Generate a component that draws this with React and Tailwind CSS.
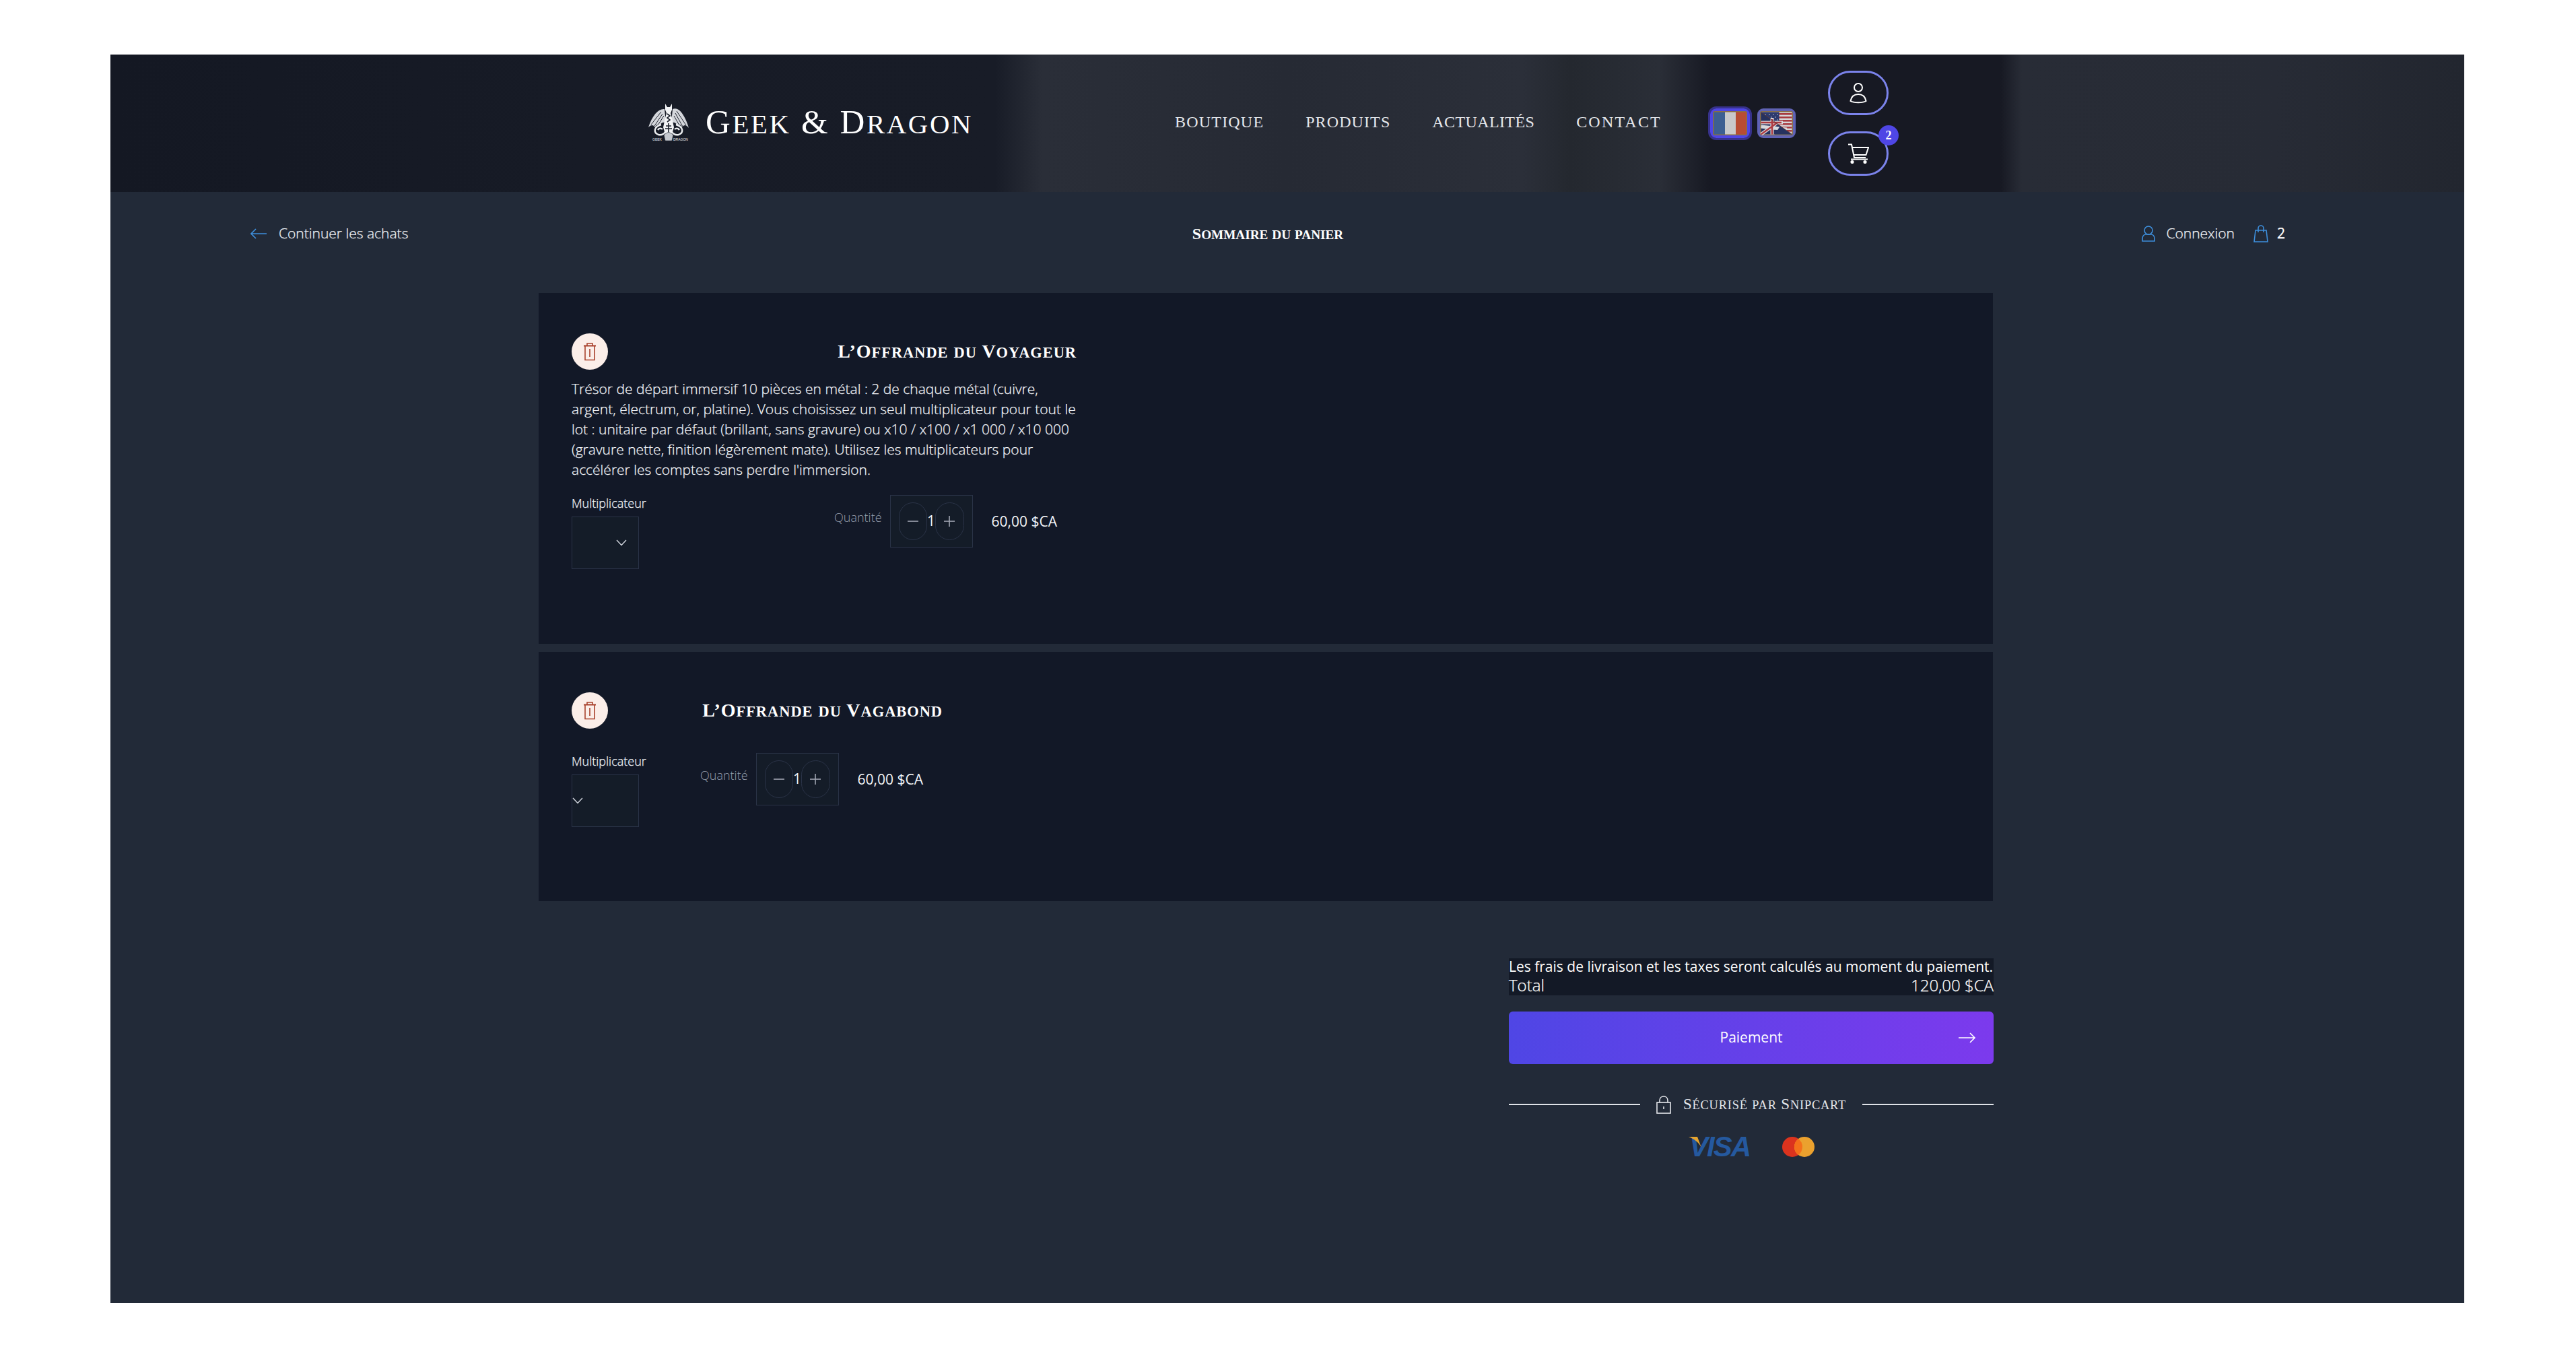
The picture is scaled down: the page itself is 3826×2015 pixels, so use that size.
import React from "react";

const serif = "[font-family:'Liberation_Serif',serif]";
const sans = "[font-family:'Open_Sans',sans-serif]";
const crisp = "[-webkit-text-stroke:0.25px_currentColor]";

function SC({ text }) {
  const parts = text.match(/[a-zàâéèêëîïôöùûç]+|[^a-zàâéèêëîïôöùûç]+/g);
  return (
    <>
      {parts.map((p, i) =>
        /^[a-zàâéèêëîïôöùûç]/.test(p) ? (
          <span key={i} className="text-[0.8em] uppercase">{p}</span>
        ) : (
          <span key={i}>{p}</span>
        )
      )}
    </>
  );
}

function Dragon() {
  return (
    <svg width="62" height="60" viewBox="0 0 62 60" className="shrink-0">
      <path d="M25 9 C16 8 7 18 1 36 C5 32 8 32 11 36 C12 32 15 31 18 34 C19 30 22 28 27 29 Z" fill="#d4d6db" />
      <path d="M37 9 C46 5 55 17 61 37 C57 32 54 32 51 36 C50 32 47 31 44 34 C43 30 40 28 35 29 Z" fill="#d4d6db" />
      <path d="M5 32 L20 13 M10 34 L22 16 M15 33 L24 19 M57 33 L43 12 M52 35 L41 15 M47 33 L39 19" stroke="#20242f" strokeWidth="1" fill="none" />
      <path d="M26 1 L29 6 L33 6 L36 1 L36 10 L34 15 L36 22 L39 36 L36 46 L26 46 L23 36 L26 22 L28 15 L26 10 Z" fill="#f2f3f5" />
      <path d="M29 16 L33 19 L29 22 L33 25 L29 28 M27 34 L35 34 M31 30 L31 44 M26 38 L36 38" stroke="#1a1e29" strokeWidth="1.6" fill="none" />
      <path d="M20 32 C9 35 8 44 16 47 C21 48 24 46 26 43 M15 40 C17 37 20 37 22 39 M42 32 C53 35 54 44 46 47 C41 48 38 46 36 43 M47 40 C45 37 42 37 40 39" stroke="#eceef0" strokeWidth="2.4" fill="none" />
      <path d="M31 43 L38 47 L36 56 L26 56 L24 47 Z" fill="#c5c8ce" stroke="#1a1e29" strokeWidth=".6" />
      <text x="7" y="56" fontSize="5" fill="#e5e7eb" fontFamily="Liberation Sans, sans-serif">GEEK</text>
      <text x="38" y="56" fontSize="5" fill="#e5e7eb" fontFamily="Liberation Sans, sans-serif">DRAGON</text>
    </svg>
  );
}

function FlagFr() {
  return (
    <svg width="51" height="36" viewBox="0 0 51 36" className="block rounded-[3px]">
      <rect width="51" height="36" fill="#8a6f45" />
      <rect x="1.5" y="1.5" width="16.5" height="33" fill="#3d5f92" />
      <rect x="18" y="1.5" width="16" height="33" fill="#c9c9cb" />
      <rect x="34" y="1.5" width="15.5" height="33" fill="#b84c33" />
    </svg>
  );
}

function FlagEn() {
  const stripes = [3, 8, 13, 18, 23, 28];
  return (
    <svg width="49" height="36" viewBox="0 0 49 36" className="block rounded-[3px]">
      <rect width="49" height="36" fill="#8a6f45" />
      <rect x="1.5" y="1.5" width="46" height="33" fill="#d6d6d8" />
      {stripes.map((y) => (
        <rect key={y} x="1.5" y={y} width="46" height="2.6" fill="#a83a3f" />
      ))}
      <rect x="1.5" y="1.5" width="27" height="15" fill="#2d3a6e" />
      <g fill="#dfe0e4">
        <circle cx="8" cy="5" r=".7" /><circle cx="14" cy="5" r=".7" /><circle cx="20" cy="5" r=".7" /><circle cx="26" cy="5" r=".7" />
        <circle cx="17" cy="9" r=".7" /><circle cx="23" cy="9" r=".7" /><circle cx="26" cy="13" r=".7" />
      </g>
      <path d="M1.5 1.5 L47.5 34.5 L1.5 34.5 Z" fill="#26325f" />
      <path d="M1.5 17 L34 17 M18 34.5 L18 10 M1.5 34.5 L26 17 M1.5 23 L40 27" stroke="#d9d9dc" strokeWidth="5" fill="none" />
      <path d="M1.5 17 L32 17 M18 34.5 L18 12 M1.5 34.5 L26 17" stroke="#ad3a40" strokeWidth="2.5" fill="none" />
      <path d="M22 34.5 L47.5 34.5 L30 22 Z" fill="#26325f" />
      <path d="M1.5 1.5 L47.5 34.5" stroke="#5a3a3a" strokeWidth="1" />
    </svg>
  );
}

function Trash() {
  return (
    <svg width="20" height="27" viewBox="0 0 20 27" fill="none" stroke="#a8412c" strokeWidth="1.6">
      <path d="M6 4 V1 H14 V4" />
      <path d="M1 4.5 H19" strokeWidth="2" />
      <path d="M3 5 V25.5 H17 V5" />
      <path d="M10 9 V21" />
    </svg>
  );
}

function Chevron() {
  return (
    <svg width="16" height="10" viewBox="0 0 16 10" fill="none" stroke="#d8dce4" strokeWidth="1.3">
      <path d="M1 1 L8 8.5 L15 1" />
    </svg>
  );
}

function QtyButton({ plus }) {
  return (
    <div className="flex h-[56px] w-[43px] items-center justify-center rounded-full border border-[#2a3347]">
      <svg width="18" height="18" viewBox="0 0 18 18" stroke="#a0a6b2" strokeWidth="1.6">
        <path d="M1 9 H17" />
        {plus ? <path d="M9 1 V17" /> : null}
      </svg>
    </div>
  );
}

function Controls({ width, chevron }) {
  return (
    <div className={`flex items-start justify-between ${width}`}>
      <div className="flex w-[111px] flex-col gap-2">
        <div className={`${sans} ${crisp} h-6 text-[18px] leading-6 font-light whitespace-nowrap text-[#f3f5f9]`}>Multiplicateur</div>
        <div className={`flex h-[78px] w-[100px] items-center border border-[#2a3347] bg-[#141c28] ${chevron}`}>
          <Chevron />
        </div>
      </div>
      <div className="flex items-start pr-[29px]">
        <div className={`${sans} mt-[20px] mr-[12px] text-[18px] leading-[26px] font-light text-[#979eab]`}>Quantité</div>
        <div className="flex h-[78px] w-[123px] items-center justify-between border border-[#2a3347] bg-[#141c28] px-[12px]">
          <QtyButton />
          <span className={`${sans} text-[21px] text-[#eef1f5]`}>1</span>
          <QtyButton plus />
        </div>
        <div className={`${sans} ml-[28px] text-[21px] leading-[78px] whitespace-nowrap text-[#f3f5f8]`}>60,00 $CA</div>
      </div>
    </div>
  );
}

function TitleRow({ text }) {
  return (
    <div className="flex h-[54px] items-center justify-between">
      <div className="flex h-[54px] w-[54px] items-center justify-center rounded-full bg-[#fbeee9]">
        <Trash />
      </div>
      <h2 className={`${serif} text-[28px] font-bold tracking-[1px] whitespace-nowrap text-white`}><SC text={text} /></h2>
    </div>
  );
}

export default function App() {
  return (
    <div className="h-[2015px] w-[3826px] overflow-hidden bg-white pt-[81px] pl-[164px]">
      <div className="flex h-[1854px] w-[3496px] flex-col bg-[#222a38]">
        <header className="flex h-[204px] items-center bg-[linear-gradient(90deg,#141823_0%,#171b26_20%,#181c27_37.6%,#2a2e38_39.6%,#262a34_50%,#2b2f39_60%,#24282f_62%,#2a2e37_65.8%,#171923_68%,#171923_80.3%,#282c36_81.2%,#272b35_92%,#22262f_100%)] pl-[798px]">
          <Dragon />
          <div className={`${serif} ml-[24px] w-[394px] -translate-y-[2px] text-[51px] leading-none font-normal tracking-[2.6px] whitespace-nowrap text-white`}><SC text="Geek & Dragon" /></div>
          <nav className={`${serif} ml-[303px] flex w-[723px] -translate-y-[2px] justify-between text-[24px] text-[#e5e7eb]`}>
            <span className="tracking-[1.2px]">BOUTIQUE</span>
            <span className="tracking-[1.1px]">PRODUITS</span>
            <span className="tracking-[0.4px]">ACTUALITÉS</span>
            <span className="tracking-[2.2px]">CONTACT</span>
          </nav>
          <div className="ml-[72px] flex items-center gap-[11px]">
            <div className="rounded-[9px] border-[4px] border-[#4f46e5] shadow-[0_0_0_3px_#37328b]"><FlagFr /></div>
            <div className="rounded-[9px] border-[4px] border-[#5f62b4]"><FlagEn /></div>
          </div>
          <div className="ml-[48px] flex flex-col gap-[24px]">
            <div className="flex h-[66px] w-[90px] items-center justify-center rounded-full border-[3px] border-[#7b83eb]">
              <svg width="26" height="32" viewBox="0 0 26 32" fill="none" stroke="white" strokeWidth="2">
                <circle cx="13" cy="8" r="6" />
                <path d="M1.5 28 C3 20 8 18 13 18 C18 18 23 20 24.5 28 C20 31 6 31 1.5 28 Z" />
              </svg>
            </div>
            <div className="relative flex h-[66px] w-[90px] items-center justify-center rounded-full border-[3px] border-[#7b83eb]">
              <svg width="32" height="30" viewBox="0 0 32 30" fill="none" stroke="white" strokeWidth="2">
                <path d="M1 1.5 H6 L10 21 H27" />
                <path d="M7 6 H31 L27.5 17 H9.5" />
                <path d="M5 23.5 H30" />
                <circle cx="7" cy="27.5" r="1.6" fill="white" />
                <circle cx="26" cy="27.5" r="1.6" fill="white" />
              </svg>
              <div className={`absolute -top-[12px] -right-[18px] flex h-[30px] w-[30px] items-center justify-center rounded-full bg-[#4f46e5] ${serif} text-[18px] font-bold text-white`}>2</div>
            </div>
          </div>
        </header>

        <main className="flex flex-1 flex-col">
          <div className="flex h-[124px] items-center justify-between pr-[266px] pl-[208px]">
            <div className={`${sans} ${crisp} flex w-[400px] items-center gap-[18px] text-[21px] font-light text-[#eef1f6]`}>
              <svg width="24" height="16" viewBox="0 0 24 16" fill="none" stroke="#3e8fdc" strokeWidth="1.6">
                <path d="M24 8 H1 M8 1 L1 8 L8 15" />
              </svg>
              <span>Continuer les achats</span>
            </div>
            <div className={`${serif} text-[24px] font-bold whitespace-nowrap text-white`}><SC text="Sommaire du panier" /></div>
            <div className={`${sans} ${crisp} flex w-[400px] items-center justify-end text-[21px] font-light text-[#f3f5f9]`}>
              <svg width="20" height="24" viewBox="0 0 20 24" fill="none" stroke="#3e8fdc" strokeWidth="1.6" className="mr-[16px]">
                <circle cx="10" cy="7" r="6" />
                <path d="M1 19 C1 15 4 13 6 13 H14 C16 13 19 15 19 19 V23 H1 Z" />
              </svg>
              <span>Connexion</span>
              <svg width="22" height="26" viewBox="0 0 22 26" fill="none" stroke="#3e8fdc" strokeWidth="1.6" className="mr-[13px] ml-[28px]">
                <path d="M3 8 H19 L21 25 H1 Z" />
                <path d="M7 11 V5 C7 2.5 9 1 11 1 C13 1 15 2.5 15 5 V11" />
              </svg>
              <span className="font-normal text-white">2</span>
            </div>
          </div>

          <div className="mt-[26px] ml-[636px] flex w-[2160px] flex-col gap-[12px]">
            <section className="bg-[#121827] pt-[60px] pr-[49px] pb-[111px] pl-[49px]">
              <div className="flex w-[750px] flex-col">
                <TitleRow text="L’Offrande du Voyageur" />
                <p className={`${sans} ${crisp} mt-[13px] mb-[23px] text-[21px] leading-[30px] font-light text-[#f3f5f9]`}>
                  Trésor de départ immersif 10 pièces en métal : 2 de chaque métal (cuivre, argent, électrum, or, platine). Vous choisissez un seul multiplicateur pour tout le lot : unitaire par défaut (brillant, sans gravure) ou x10 / x100 / x1 000 / x10 000 (gravure nette, finition légèrement mate). Utilisez les multiplicateurs pour accélérer les comptes sans perdre l'immersion.
                </p>
                <Controls width="w-[750px]" chevron="justify-end pr-[17px]" />
              </div>
            </section>
            <section className="bg-[#121827] pt-[60px] pr-[49px] pb-[110px] pl-[49px]">
              <div className="flex w-[551px] flex-col">
                <TitleRow text="L’Offrande du Vagabond" />
                <div className="mt-[36px]">
                  <Controls width="w-[551px]" chevron="justify-start" />
                </div>
              </div>
            </section>
          </div>

          <div className="mt-[85px] ml-[2077px] flex w-[720px] flex-col">
            <div className={`${sans} bg-[#131926] text-white`}>
              <div className="h-[26px] text-[21px] leading-[24px] font-normal whitespace-nowrap">Les frais de livraison et les taxes seront calculés au moment du paiement.</div>
              <div className={`flex h-[29px] justify-between text-[24px] leading-[27px] font-light ${crisp}`}>
                <span>Total</span>
                <span>120,00 $CA</span>
              </div>
            </div>
            <div className={`${sans} relative mt-[24px] flex h-[78px] items-center justify-center rounded-[6px] bg-[linear-gradient(90deg,#4f46e5,#7c3aed)] text-[21px] font-medium text-white`}>
              <span>Paiement</span>
              <svg width="26" height="16" viewBox="0 0 26 16" fill="none" stroke="white" strokeWidth="1.6" className="absolute right-[26px]">
                <path d="M0 8 H24 M17 1 L24 8 L17 15" />
              </svg>
            </div>
            <div className="mt-[47px] flex h-[26px] items-center justify-between">
              <div className="h-[2px] w-[195px] bg-[#dfe2e7]" />
              <div className="flex items-center gap-[18px]">
                <svg width="22" height="27" viewBox="0 0 22 27" fill="none" stroke="#e5e7eb" strokeWidth="1.6">
                  <rect x="1" y="10" width="20" height="16" />
                  <path d="M5 10 V7 C5 3 8 1 11 1 C14 1 17 3 17 7 V10" />
                  <path d="M11 16 V20" />
                </svg>
                <span className={`${serif} text-[23px] tracking-[0.8px] whitespace-nowrap text-[#e5e7eb]`}><SC text="Sécurisé par Snipcart" /></span>
              </div>
              <div className="h-[2px] w-[195px] bg-[#dfe2e7]" />
            </div>
            <div className="mt-[35px] flex h-[30px] items-center justify-center gap-[48px] pl-[2px]">
              <div className="relative">
                <span className="block [font-family:'Liberation_Sans',sans-serif] text-[42px] leading-[30px] font-bold tracking-[-2px] text-[#25599f] italic">VISA</span>
                <svg width="20" height="16" viewBox="0 0 20 16" className="absolute top-0 -left-[1px]">
                  <path d="M0 0 H13 L19 16 C15 8 8 3 0 0 Z" fill="#e6a42e" />
                </svg>
              </div>
              <svg width="48" height="30" viewBox="0 0 48 30">
                <circle cx="15" cy="15" r="15" fill="#db331e" />
                <circle cx="33" cy="15" r="15" fill="#eba12e" />
                <path d="M24 3 A15 15 0 0 1 24 27 A15 15 0 0 1 24 3 Z" fill="#f4701a" />
              </svg>
            </div>
          </div>
        </main>
      </div>
    </div>
  );
}
